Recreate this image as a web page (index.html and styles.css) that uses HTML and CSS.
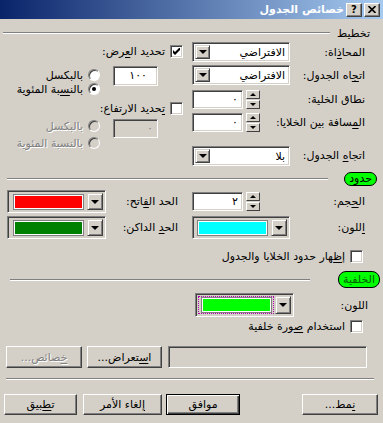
FILE: index.html
```html
<!DOCTYPE html>
<html lang="ar" dir="rtl">
<head>
    <meta charset="UTF-8">
    <title>خصائص الجدول</title>
    <link rel="stylesheet" href="styles.css">
</head>
<body>
<div class="dialog">
    <div class="titlebar">
        <span class="cap-btn"><svg width="8" height="7" viewBox="0 0 8 7"><path d="M0.5 0l7 7M7.5 0l-7 7" stroke="#000" stroke-width="1.6"/></svg></span>
        <span class="cap-btn help">?</span>
        <span class="caption">خصائص الجدول</span>
    </div>

    <!-- Layout -->
    <section class="layout">
        <div class="group-head">
            <span class="group-title">تخطيط</span>
            <span class="etch"></span>
        </div>
        <div class="cols">
            <div class="col-main">
                <div class="row">
                    <span class="lbl">المحا<u>ذ</u>اة:</span>
                    <div class="combo"><span class="combo-text">الافتراضي</span><span class="drop"><i class="tri-down"></i></span></div>
                </div>
                <div class="row r2">
                    <span class="lbl">ات&zwj;<u>&zwj;ج&zwj;</u>&zwj;اه الجدول:</span>
                    <div class="combo"><span class="combo-text">الافتراضي</span><span class="drop"><i class="tri-down"></i></span></div>
                </div>
                <div class="row r3">
                    <span class="lbl">نطاق الخلية:</span>
                    <div class="spin">
                        <span class="spinner"><span class="spin-btn"><i class="tri-up"></i></span><span class="spin-btn"><i class="tri-dn"></i></span></span>
                        <span class="field">٠</span>
                    </div>
                </div>
                <div class="row r4">
                    <span class="lbl">ال&zwj;<u>&zwj;م&zwj;</u>&zwj;سافة بين الخلايا:</span>
                    <div class="spin">
                        <span class="spinner"><span class="spin-btn"><i class="tri-up"></i></span><span class="spin-btn"><i class="tri-dn"></i></span></span>
                        <span class="field">٠</span>
                    </div>
                </div>
                <div class="row r5">
                    <span class="lbl">اتجا<u>ه</u> الجدول:</span>
                    <div class="combo"><span class="combo-text">بلا</span><span class="drop"><i class="tri-down"></i></span></div>
                </div>
            </div>

            <div class="col-side">
                <div class="check-row c1">
                    <span class="ck"><svg width="7" height="7" viewBox="0 0 7 7"><path d="M0 2L2 4L7 -1V2L2 7L0 5Z" fill="#000"/></svg></span>
                    <span>تحديد ال&zwj;<u>&zwj;ع&zwj;</u>&zwj;رض:</span>
                </div>
                <div class="size-block">
                    <span class="field num">١٠٠</span>
                    <div class="radios">
                        <div class="radio-row"><span class="rb"></span><span>بالبكسل</span></div>
                        <div class="radio-row"><span class="rb on"></span><span>بالن&zwj;<u>&zwj;س&zwj;</u>&zwj;بة المئوية</span></div>
                    </div>
                </div>
                <div class="check-row c2">
                    <span class="ck"></span>
                    <span><u>ت&zwj;</u>&zwj;حديد الارتفاع:</span>
                </div>
                <div class="size-block off">
                    <span class="field dim">٠</span>
                    <div class="radios">
                        <div class="radio-row"><span class="rb"></span><span class="grey">بالبكسل</span></div>
                        <div class="radio-row"><span class="rb"></span><span class="grey">بالنسبة المئوية</span></div>
                    </div>
                </div>
            </div>
        </div>
    </section>

    <!-- Borders -->
    <section class="borders">
        <div class="group-head">
            <span class="pill">حدود</span>
            <span class="etch"></span>
        </div>
        <div class="cols">
            <div class="col-main">
                <div class="row tall">
                    <span class="lbl">ال&zwj;<u>&zwj;ح&zwj;</u>&zwj;جم:</span>
                    <div class="spin">
                        <span class="spinner"><span class="spin-btn"><i class="tri-up"></i></span><span class="spin-btn"><i class="tri-dn"></i></span></span>
                        <span class="field">٢</span>
                    </div>
                </div>
                <div class="row tall r2">
                    <span class="lbl"><u>ا</u>للون:</span>
                    <div class="color-combo"><span class="swatch-area"><span class="swatch cyan"></span></span><span class="drop"><i class="tri-down"></i></span></div>
                </div>
            </div>
            <div class="col-side">
                <div class="row tall">
                    <span class="lbl">الحد ال&zwj;<u>&zwj;ف&zwj;</u>&zwj;اتح:</span>
                    <div class="color-combo"><span class="swatch-area"><span class="swatch red"></span></span><span class="drop"><i class="tri-down"></i></span></div>
                </div>
                <div class="row tall r2">
                    <span class="lbl">الح&zwj;<u>&zwj;د</u> الداكن:</span>
                    <div class="color-combo"><span class="swatch-area"><span class="swatch green"></span></span><span class="drop"><i class="tri-down"></i></span></div>
                </div>
            </div>
        </div>
        <div class="check-row wide">
            <span class="ck"></span>
            <span>إ<u>ظ&zwj;</u>&zwj;هار حدود الخلايا والجدول</span>
        </div>
    </section>

    <!-- Background -->
    <section class="background">
        <div class="group-head">
            <span class="pill big">الخلفية</span>
            <span class="etch"></span>
        </div>
        <div class="row bg-color">
            <span class="lbl">اللون:</span>
            <div class="color-combo"><span class="swatch-area focus"><span class="swatch lime"></span></span><span class="drop"><i class="tri-down"></i></span></div>
        </div>
        <div class="check-row wide img-row">
            <span class="ck"></span>
            <span>استخدام <u>ص&zwj;</u>&zwj;ورة خلفية</span>
        </div>
        <div class="path-row">
            <span class="path-field"></span>
            <span class="btn">ا<u>س&zwj;</u>&zwj;تعراض...</span>
            <span class="btn disabled"><u>خ&zwj;</u>&zwj;صائص...</span>
        </div>
    </section>

    <div class="separator"></div>

    <div class="footer">
        <span class="btn"><u>ن&zwj;</u>&zwj;مط...</span>
        <span class="btn default">موافق</span>
        <span class="btn"><u>إ</u>لغاء الأمر</span>
        <span class="btn">ت&zwj;<u>&zwj;ط&zwj;</u>&zwj;بيق</span>
    </div>
</div>
</body>
</html>
```

FILE: styles.css
```css
* {
    margin: 0;
    padding: 0;
    box-sizing: border-box;
}

body {
    background-color: #d4d0c8;
    color: #000000;
    font-family: "DejaVu Sans", sans-serif;
    font-size: 11px;
    overflow: hidden;
}

u {
    text-decoration: underline;
    text-underline-offset: 2px;
}

.dialog {
    width: 383px;
    height: 423px;
    direction: rtl;
}

/* title bar */

.titlebar {
    height: 19px;
    display: flex;
    align-items: center;
    gap: 2px;
    padding-right: 3px;
    background: linear-gradient(to right, #0a246a, #a6caf0);
}

.cap-btn {
    width: 16px;
    height: 14px;
    display: flex;
    align-items: center;
    justify-content: center;
    background-color: #d4d0c8;
    border-top: 1px solid #ffffff;
    border-left: 1px solid #ffffff;
    border-right: 1px solid #404040;
    border-bottom: 1px solid #404040;
    box-shadow: inset -1px -1px 0 #808080;
    font-weight: bold;
    font-size: 10px;
}

.caption {
    color: #ffffff;
    font-weight: bold;
}

/* group headings */

.group-head {
    display: flex;
    align-items: center;
}

.etch {
    flex: 1;
    height: 2px;
    border-top: 1px solid #808080;
    border-bottom: 1px solid #ffffff;
}

.pill {
    height: 14px;
    line-height: 12px;
    padding: 0 4px;
    background-color: #00ff00;
    border: 1px solid #000000;
    border-radius: 7px;
}

.pill.big {
    height: 17px;
    line-height: 15px;
    border-radius: 8px;
    color: #006000;
}

.layout .group-head {
    margin-top: 7px;
    height: 14px;
    padding: 0 13px 0 3px;
}

.layout .etch {
    margin-right: 7px;
}

.borders .group-head {
    margin-top: 7px;
    padding: 0 6px 0 7px;
}

.borders .etch {
    margin-right: 16px;
}

.background .group-head {
    margin-top: 7px;
    padding: 0 3px 0 10px;
}

.background .etch {
    margin-right: 28px;
}

/* columns */

.cols {
    display: flex;
    margin-top: 2px;
}

.borders .cols {
    margin-top: 4px;
}

.col-main {
    width: 191px;
}

.col-side {
    flex: 1;
}

.row {
    display: flex;
    align-items: center;
    height: 20px;
}

.row.tall {
    height: 23px;
}

.layout .r2 { margin-top: 3px; }
.layout .r3 { margin-top: 5px; height: 19px; }
.layout .r4 { margin-top: 4px; height: 19px; }
.layout .r5 { margin-top: 14px; height: 19px; }
.borders .r2 { margin-top: 3px; }

.lbl {
    width: 75px;
    margin-right: 18px;
    white-space: nowrap;
}

.borders .col-side .lbl {
    width: 72px;
    margin-right: 14px;
}

/* sunken boxes */

.combo,
.field,
.color-combo,
.ck,
.path-field {
    border-top: 1px solid #808080;
    border-left: 1px solid #808080;
    border-right: 1px solid #ffffff;
    border-bottom: 1px solid #ffffff;
    box-shadow: inset 1px 1px 0 #404040, inset -1px -1px 0 #d4d0c8;
}

.combo {
    width: 98px;
    height: 20px;
    padding: 2px;
    display: flex;
    background-color: #ffffff;
}

.combo-text {
    flex: 1;
    padding-right: 2px;
    line-height: 16px;
    white-space: nowrap;
}

.drop {
    width: 15px;
    display: flex;
    align-items: center;
    justify-content: center;
    background-color: #d4d0c8;
    border-top: 1px solid #d4d0c8;
    border-left: 1px solid #d4d0c8;
    border-right: 1px solid #404040;
    border-bottom: 1px solid #404040;
    box-shadow: inset 1px 1px 0 #ffffff, inset -1px -1px 0 #808080;
}

.tri-down {
    border-left: 4px solid transparent;
    border-right: 4px solid transparent;
    border-top: 4px solid #000000;
}

.tri-up,
.tri-dn {
    border-left: 3px solid transparent;
    border-right: 3px solid transparent;
}

.tri-up {
    border-bottom: 3px solid #000000;
}

.tri-dn {
    border-top: 3px solid #000000;
}

/* spin boxes */

.spin {
    width: 98px;
    height: 19px;
    display: flex;
    justify-content: flex-end;
    gap: 3px;
}

.field {
    width: 51px;
    height: 19px;
    padding-right: 4px;
    line-height: 17px;
    background-color: #ffffff;
}

.spinner {
    width: 14px;
    display: flex;
    flex-direction: column;
}

.spin-btn {
    height: 9px;
    display: flex;
    align-items: center;
    justify-content: center;
    background-color: #d4d0c8;
    border-top: 1px solid #ffffff;
    border-left: 1px solid #ffffff;
    border-right: 1px solid #404040;
    border-bottom: 1px solid #404040;
}

.spin-btn + .spin-btn {
    margin-top: 1px;
}

/* side options */

.check-row {
    display: flex;
    align-items: center;
    gap: 5px;
    height: 15px;
    white-space: nowrap;
}

.col-side .check-row {
    padding-right: 9px;
}

.check-row.c1 { margin-top: 2px; }
.check-row.c2 { margin-top: 5px; }

.ck {
    width: 13px;
    height: 13px;
    display: flex;
    align-items: center;
    justify-content: center;
    background-color: #ffffff;
}

.size-block {
    display: flex;
    align-items: flex-start;
    gap: 13px;
    margin-top: 7px;
    margin-right: 34px;
}

.size-block .field {
    width: 45px;
    height: 20px;
    line-height: 18px;
}

.field.num {
    padding-right: 10px;
}

.size-block.off {
    margin-top: 3px;
}

.size-block.off .field {
    height: 19px;
    background-color: #d4d0c8;
    color: #808080;
}

.radios {
    padding-top: 2px;
    display: flex;
    flex-direction: column;
}

.size-block.off .radios {
    padding-top: 0;
    gap: 3px;
}

.radio-row {
    display: flex;
    align-items: center;
    gap: 5px;
    height: 14px;
    white-space: nowrap;
}

.rb {
    width: 12px;
    height: 12px;
    border-radius: 50%;
    display: flex;
    align-items: center;
    justify-content: center;
    background-color: #ffffff;
    border: 1px solid;
    border-color: #808080 #ffffff #ffffff #808080;
    box-shadow: inset 1px 1px 0 #404040;
}

.rb.on::after {
    content: "";
    width: 4px;
    height: 4px;
    border-radius: 50%;
    background-color: #000000;
}

.off .rb {
    background-color: #d4d0c8;
}

.grey {
    color: #808080;
    text-shadow: 1px 1px 0 #ffffff;
}

/* colour pickers */

.color-combo {
    width: 99px;
    height: 23px;
    padding: 2px;
    gap: 1px;
    display: flex;
    direction: ltr;
    background-color: #d4d0c8;
}

.swatch-area {
    flex: 1;
    display: flex;
    align-items: center;
    justify-content: center;
}

.swatch-area.focus {
    margin: 1px;
    outline: 1px dotted #b000b0;
}

.color-combo .drop {
    width: 16px;
}

.swatch {
    width: 69px;
    height: 14px;
    border: 1px solid #ffffff;
    box-shadow: 0 0 0 1px #808080;
}

.swatch.red { background-color: #ff0000; }
.swatch.cyan { background-color: #00ffff; }
.swatch.green { background-color: #008000; }
.swatch.lime { background-color: #00ff00; }

.check-row.wide {
    margin-top: 9px;
    height: 16px;
    padding-right: 20px;
}

/* background section */

.row.bg-color {
    margin-top: 5px;
    height: 24px;
}

.bg-color .lbl {
    width: 74px;
    margin-right: 15px;
}

.bg-color .color-combo {
    height: 24px;
}

.check-row.img-row {
    margin-top: 2px;
    height: 15px;
}

.path-row {
    display: flex;
    gap: 5px;
    margin-top: 12px;
    padding-right: 16px;
    height: 22px;
}

.path-field {
    width: 199px;
    margin-left: 1px;
    background-color: #d4d0c8;
}

/* buttons */

.btn {
    width: 75px;
    display: flex;
    align-items: center;
    justify-content: center;
    background-color: #d4d0c8;
    border-top: 1px solid #ffffff;
    border-left: 1px solid #ffffff;
    border-right: 1px solid #404040;
    border-bottom: 1px solid #404040;
    box-shadow: inset -1px -1px 0 #808080;
    white-space: nowrap;
}

.btn.disabled {
    width: 76px;
    color: #808080;
    text-shadow: 1px 1px 0 #ffffff;
}

.btn.default {
    border: 1px solid #000000;
    box-shadow: inset 1px 1px 0 #ffffff, inset -1px -1px 0 #404040, inset -2px -2px 0 #808080;
}

.separator {
    height: 2px;
    margin: 10px 9px 0 6px;
    border-top: 1px solid #808080;
    border-bottom: 1px solid #ffffff;
}

.footer {
    display: flex;
    height: 21px;
    margin-top: 14px;
    padding-right: 5px;
}

.footer .btn:nth-child(1) { width: 76px; }
.footer .btn:nth-child(2) { width: 74px; margin-right: 62px; }
.footer .btn:nth-child(3) { width: 79px; margin-right: 4px; }
.footer .btn:nth-child(4) { width: 73px; margin-right: 6px; }
```
